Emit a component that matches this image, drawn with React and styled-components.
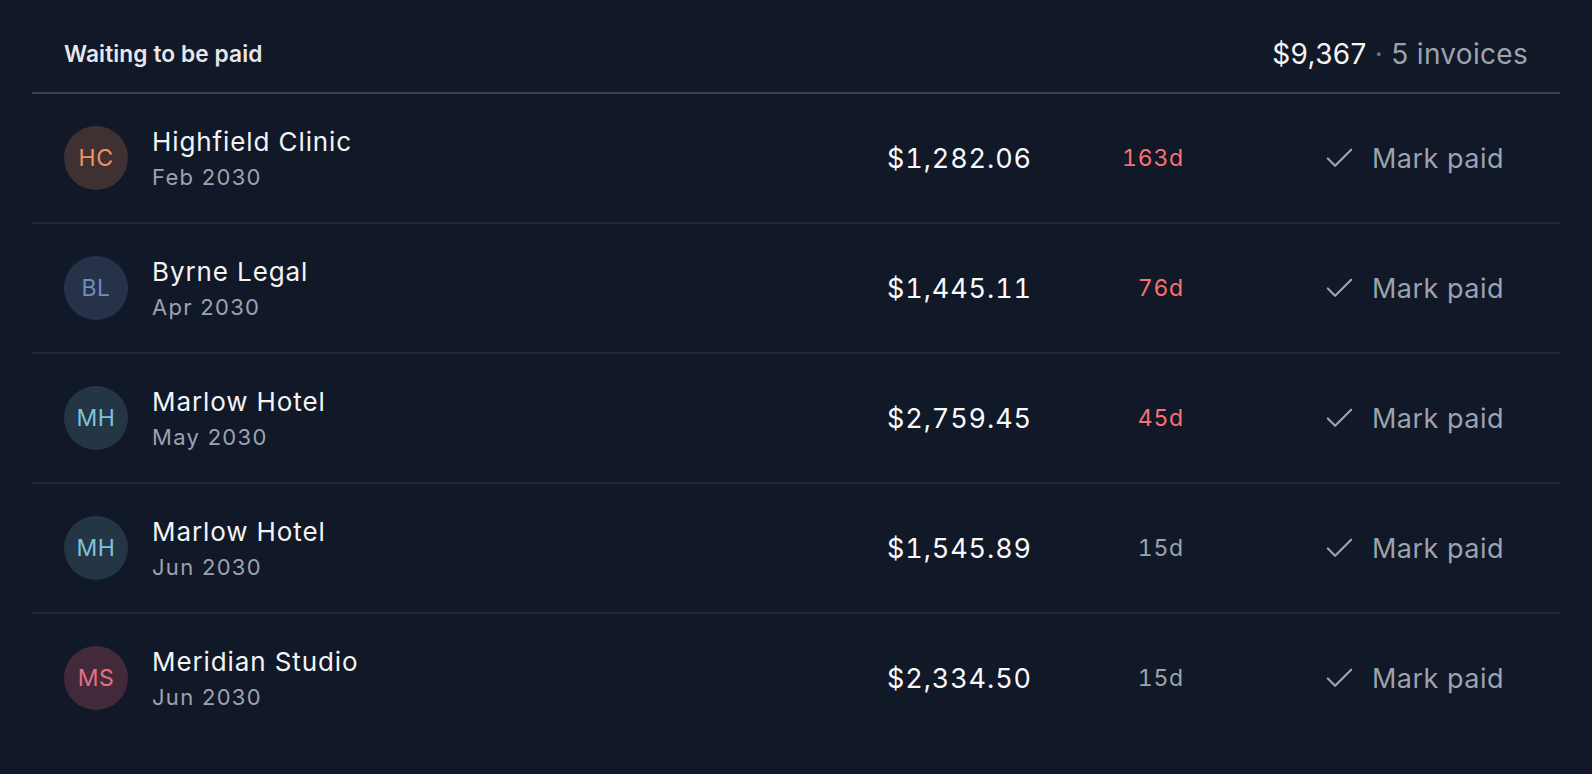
import React from "react";
import styled, { createGlobalStyle } from "styled-components";
import { Check } from "lucide-react";

const GlobalStyle = createGlobalStyle`
  html, body {
    margin: 0;
    background: #111827;
  }
  body {
    font-family: Inter, "Noto Sans", sans-serif;
    -webkit-font-smoothing: antialiased;
  }
`;

const Panel = styled.div`
  padding: 0 32px;
  background: #111827;
  min-height: 774px;
  box-sizing: border-box;
`;

const Header = styled.div`
  display: flex;
  align-items: center;
  justify-content: space-between;
  height: 94px;
  padding: 15px 32px 0;
  box-sizing: border-box;
  border-bottom: 2px solid #374151;
`;

const Title = styled.h2`
  margin: 0;
  font-size: 22.7px;
  font-weight: 600;
  letter-spacing: 0.1px;
  color: #e5e7eb;
`;

const Summary = styled.div`
  font-size: 28px;
  letter-spacing: 0.3px;
  color: #9ca3af;
`;

const Total = styled.span`
  color: #f3f4f6;
`;

const Dot = styled.span`
  color: #6b7280;
`;

const Row = styled.div`
  display: flex;
  align-items: center;
  height: 128px;
  padding: 0 32px;
  border-bottom: ${(p) => (p.$last ? "none" : "2px solid #1f2937")};
`;

const Client = styled.div`
  flex: 1;
  display: flex;
  align-items: center;
  gap: 24px;
  min-width: 0;
`;

const Avatar = styled.div`
  width: 64px;
  height: 64px;
  border-radius: 50%;
  flex-shrink: 0;
  display: flex;
  align-items: center;
  justify-content: center;
  font-size: 23px;
  letter-spacing: 0.5px;
  background: ${(p) => p.$bg};
  color: ${(p) => p.$fg};
`;

const Name = styled.div`
  font-size: 26px;
  line-height: 36px;
  letter-spacing: 0.9px;
  color: #f3f4f6;
`;

const Period = styled.div`
  margin-top: 2px;
  font-size: 22px;
  line-height: 30px;
  letter-spacing: 1.3px;
  color: #9ca3af;
`;

const Amount = styled.div`
  width: 201px;
  text-align: right;
  font-size: 27px;
  font-variant-numeric: tabular-nums;
  letter-spacing: 0.9px;
  color: #f9fafb;
`;

const Age = styled.div`
  width: 152px;
  text-align: right;
  font-size: 23px;
  font-variant-numeric: tabular-nums;
  letter-spacing: 0.8px;
  color: ${(p) => (p.$overdue ? "#f87171" : "#9ca3af")};
`;

const Actions = styled.div`
  width: 344px;
  display: flex;
  justify-content: flex-end;
`;

const MarkButton = styled.button`
  display: flex;
  align-items: center;
  gap: 15px;
  padding: 12px 24px;
  border: none;
  background: transparent;
  font-family: inherit;
  font-size: 27px;
  letter-spacing: 0.5px;
  color: #9ca3af;
  cursor: pointer;
`;

const palette = {
  orange: { bg: "#3f3131", fg: "#f0935c" },
  blue: { bg: "#263247", fg: "#6d8cc0" },
  cyan: { bg: "#243646", fg: "#7cc3d6" },
  rose: { bg: "#422a3a", fg: "#e56e82" },
};

const invoices = [
  { initials: "HC", name: "Highfield Clinic", period: "Feb 2030", amount: "$1,282.06", age: 163, tone: "orange" },
  { initials: "BL", name: "Byrne Legal", period: "Apr 2030", amount: "$1,445.11", age: 76, tone: "blue" },
  { initials: "MH", name: "Marlow Hotel", period: "May 2030", amount: "$2,759.45", age: 45, tone: "cyan" },
  { initials: "MH", name: "Marlow Hotel", period: "Jun 2030", amount: "$1,545.89", age: 15, tone: "cyan" },
  { initials: "MS", name: "Meridian Studio", period: "Jun 2030", amount: "$2,334.50", age: 15, tone: "rose" },
];

export default function App() {
  return (
    <>
      <GlobalStyle />
      <Panel>
        <Header>
          <Title>Waiting to be paid</Title>
          <Summary>
            <Total>$9,367</Total> <Dot>·</Dot> 5 invoices
          </Summary>
        </Header>
        {invoices.map((inv, i) => (
          <Row key={i} $last={i === invoices.length - 1}>
            <Client>
              <Avatar $bg={palette[inv.tone].bg} $fg={palette[inv.tone].fg}>
                {inv.initials}
              </Avatar>
              <div>
                <Name>{inv.name}</Name>
                <Period>{inv.period}</Period>
              </div>
            </Client>
            <Amount>{inv.amount}</Amount>
            <Age $overdue={inv.age > 30}>{inv.age}d</Age>
            <Actions>
              <MarkButton>
                <Check size={35} strokeWidth={1.5} />
                Mark paid
              </MarkButton>
            </Actions>
          </Row>
        ))}
      </Panel>
    </>
  );
}
